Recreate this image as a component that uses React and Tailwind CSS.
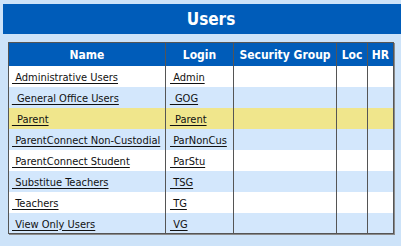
const rows = [
  { name: "\u00a0Administrative Users", login: "\u00a0Admin", bg: "bg-white" },
  { name: "_General Office Users", login: "_GOG", bg: "bg-[#d3e7fc]" },
  { name: "_Parent", login: "_Parent", bg: "bg-[#f0e68c]" },
  { name: "\u00a0ParentConnect Non-Custodial", login: "\u00a0ParNonCus", bg: "bg-[#d3e7fc]" },
  { name: "\u00a0ParentConnect Student", login: "\u00a0ParStu", bg: "bg-white" },
  { name: "\u00a0Substitue Teachers", login: "\u00a0TSG", bg: "bg-[#d3e7fc]" },
  { name: "\u00a0Teachers", login: "\u00a0TG", bg: "bg-white" },
  { name: "\u00a0View Only Users", login: "\u00a0VG", bg: "bg-[#d3e7fc]" },
];

const cols = "grid grid-cols-[156px_67px_102px_30px_25px] gap-x-px";

export default function App() {
  return (
    <div className="w-[401px] h-[246px] bg-[#cde3f9] pt-[4px] pl-[3px] font-['DejaVu_Sans_Condensed','DejaVu_Sans',sans-serif] text-[12px] overflow-hidden">
      <div className="h-[30px] bg-[#005cb9] flex items-center justify-center pl-[18px]">
        <h1 className="text-white text-[17px] font-bold leading-none">Users</h1>
      </div>
      <div className="mt-[8px] ml-[5px] w-[386px] flex">
        <div className="w-[386px] border border-[#555] bg-[#555] shadow-[1px_1px_0_#8a8a8a]">
          <div className={`${cols} h-[23px]`}>
            {["Name", "Login", "Security Group", "Loc", "HR"].map((h) => (
              <div key={h} className="bg-[#005cb9] text-white font-bold flex items-center justify-center leading-none whitespace-nowrap">
                {h}
              </div>
            ))}
          </div>
          <div className="flex flex-col">
            {rows.map((r, i) => (
              <div key={r.name} className={`${cols} ${i === rows.length - 1 ? "h-[20px]" : "h-[21px]"}`}>
                <div className={`${r.bg} flex items-center pl-[3px] pt-[2px]`}>
                  <span className="underline underline-offset-2 text-[#111] text-[11px] whitespace-nowrap leading-none">{r.name}</span>
                </div>
                <div className={`${r.bg} flex items-center pl-[4px] pt-[2px]`}>
                  <span className="underline underline-offset-2 text-[#111] text-[11px] whitespace-nowrap leading-none">{r.login}</span>
                </div>
                <div className={r.bg}></div>
                <div className={r.bg}></div>
                <div className={r.bg}></div>
              </div>
            ))}
          </div>
        </div>
      </div>
    </div>
  );
}
